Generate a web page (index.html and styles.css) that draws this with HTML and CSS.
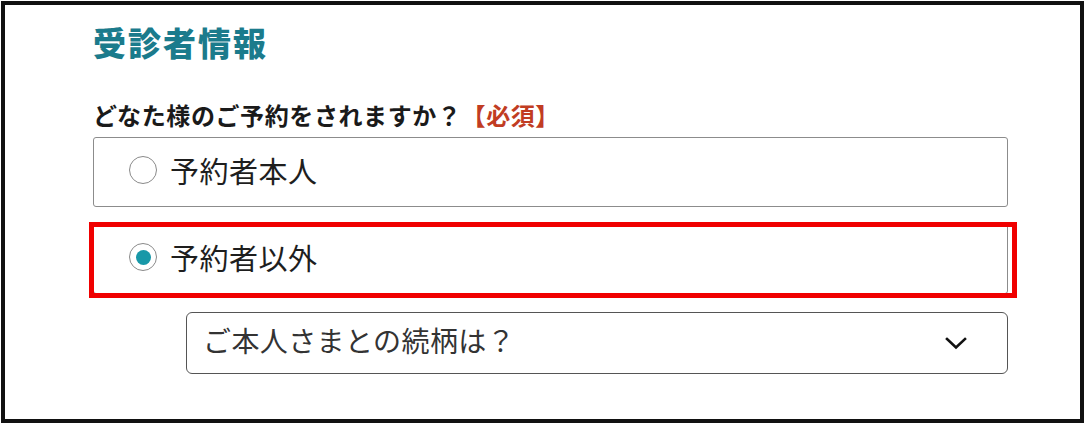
FILE: index.html
```html
<!DOCTYPE html>
<html lang="ja">
<head>
<meta charset="utf-8">
<link rel="stylesheet" href="styles.css">
</head>
<body>
<div class="frame">
  <h2 class="title">受診者情報</h2>
  <p class="question">どなた様のご予約をされますか？<span class="req">【必須】</span></p>
  <div class="options">
    <label class="option">
      <span class="radio"></span>
      <span class="opt-text">予約者本人</span>
    </label>
    <label class="option option-selected">
      <span class="radio radio-on"><span class="dot"></span></span>
      <span class="opt-text">予約者以外</span>
      <span class="highlight"></span>
    </label>
  </div>
  <div class="select">
    <span class="select-text">ご本人さまとの続柄は？</span>
    <svg class="chev" width="22" height="13" viewBox="0 0 22 13"><polyline points="2,2 11,10.5 20,2" fill="none" stroke="#111" stroke-width="2.6" stroke-linecap="square"/></svg>
  </div>
</div>
</body>
</html>
```

FILE: styles.css
```css
html, body {
  margin: 0;
  padding: 0;
  background: #fff;
}
body {
  font-family: "Noto Sans CJK JP", "Noto Sans", sans-serif;
  color: #222;
}
.frame {
  box-sizing: border-box;
  width: 1083px;
  height: 422px;
  margin: 1px 0 0 1px;
  border: 4px solid #111;
  padding: 17px 0 0 88px;
}
.title {
  margin: 0;
  font-size: 33px;
  line-height: 40px;
  font-weight: 900;
  letter-spacing: 2px;
  color: #1b7b8c;
}
.question {
  margin: 38px 0 0 0;
  font-size: 24px;
  line-height: 30px;
  font-weight: 700;
  letter-spacing: 0.6px;
  color: #1a1a1a;
}
.req {
  color: #c13c22;
}
.options {
  display: flex;
  flex-direction: column;
  gap: 17px;
  margin-top: 7px;
  width: 915px;
}
.option {
  position: relative;
  box-sizing: border-box;
  height: 70px;
  border: 1px solid #8c8c8c;
  border-radius: 3px;
  display: flex;
  align-items: center;
  padding: 0 0 4px 35px;
}
.radio {
  box-sizing: border-box;
  width: 28px;
  height: 28px;
  border: 1.5px solid #8a8a8a;
  border-radius: 50%;
  display: flex;
  align-items: center;
  justify-content: center;
  flex: none;
}
.dot {
  width: 15px;
  height: 15px;
  border-radius: 50%;
  background: #1898a8;
}
.opt-text {
  margin-left: 13px;
  font-size: 29px;
  line-height: 36px;
  letter-spacing: 0.5px;
  color: #1e1e1e;
}
.highlight {
  position: absolute;
  left: -5px;
  top: -3px;
  width: 928px;
  height: 76px;
  box-sizing: border-box;
  border: 5px solid #f00000;
  pointer-events: none;
}
.select {
  box-sizing: border-box;
  margin: 18px 0 0 93px;
  width: 822px;
  height: 62px;
  border: 1.5px solid #555;
  border-radius: 6px;
  display: flex;
  align-items: center;
  justify-content: space-between;
  padding: 0 40px 0 16px;
}
.select-text {
  margin-bottom: 6px;
  font-size: 28px;
  line-height: 34px;
  letter-spacing: 0.4px;
  color: #333;
}
.chev {
  display: block;
}
```
